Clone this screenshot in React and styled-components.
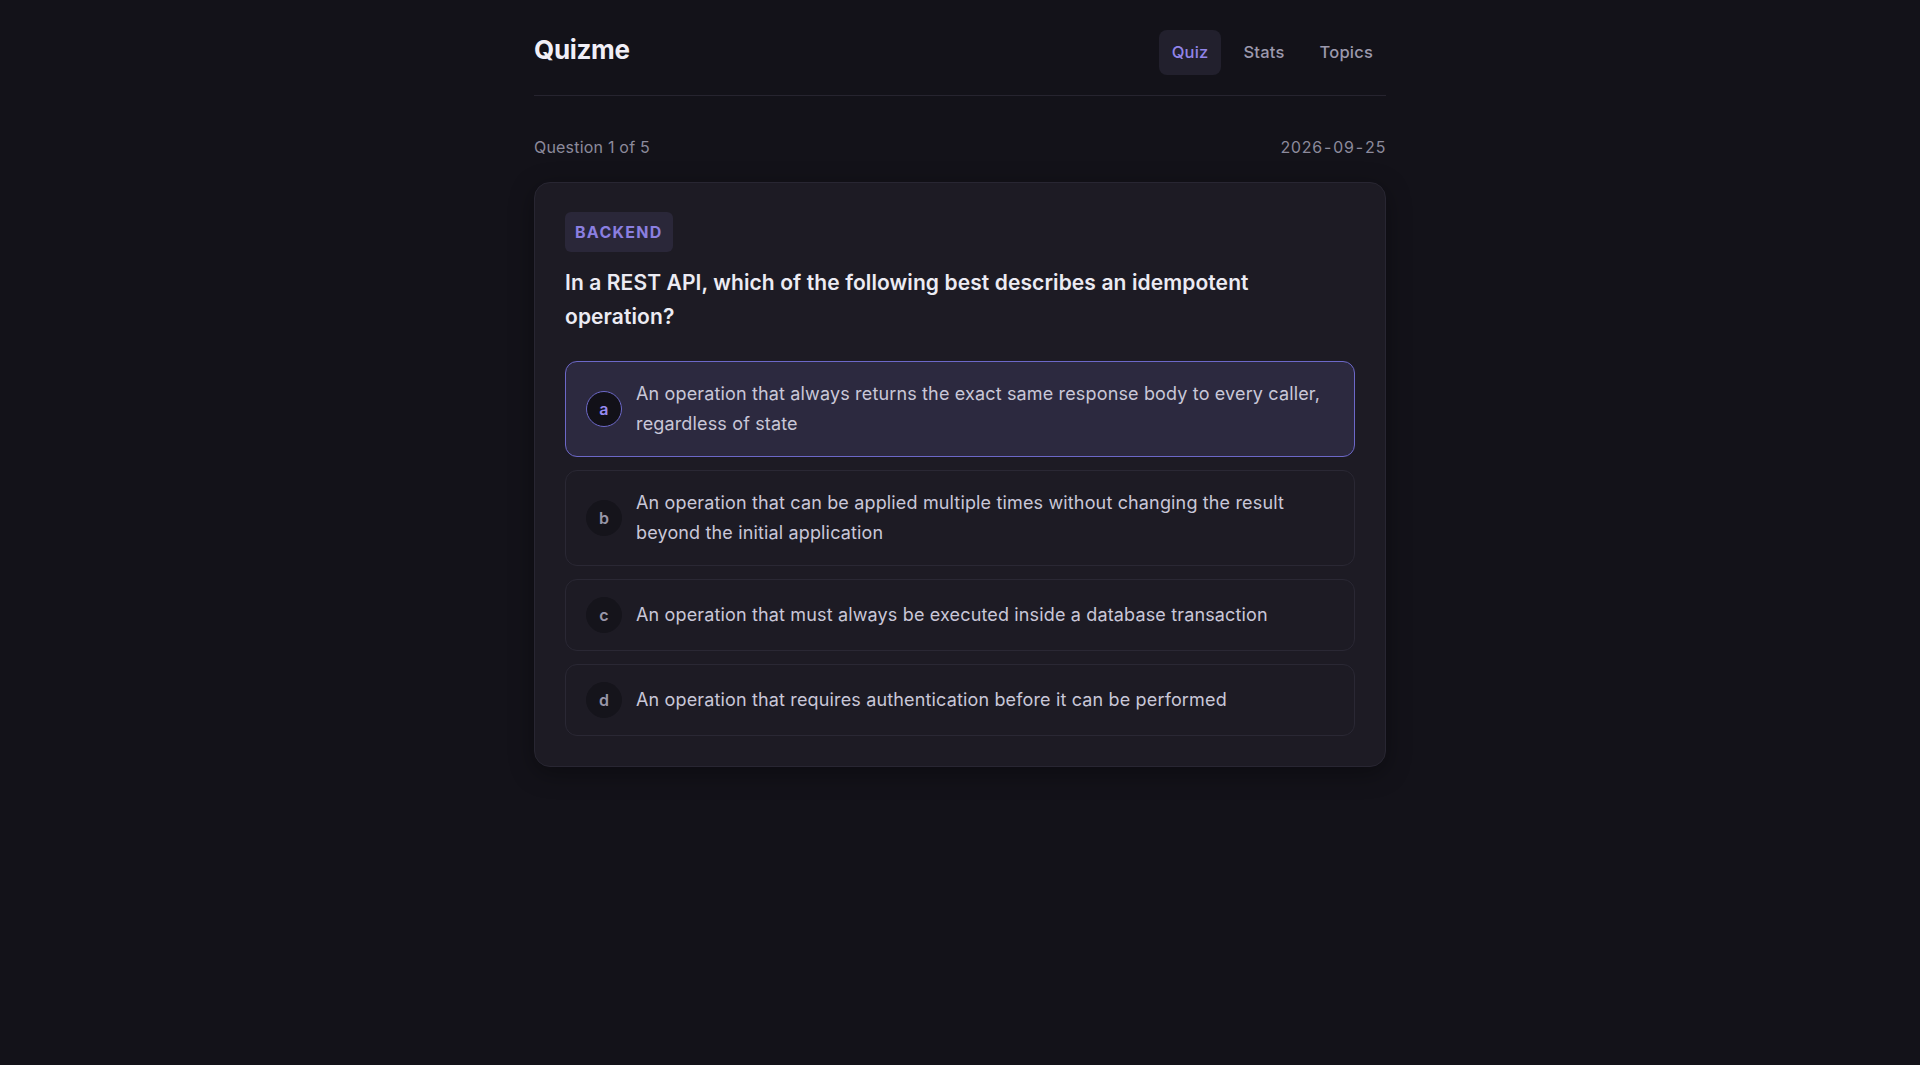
import React, { useState } from "react";
import styled, { createGlobalStyle, css } from "styled-components";

const GlobalStyle = createGlobalStyle`
  html, body {
    margin: 0;
    padding: 0;
    background: #131219;
  }
  body {
    font-family: Inter, "Noto Sans", "Liberation Sans", sans-serif;
    color: #e9e7f0;
    letter-spacing: 0.2px;
    -webkit-font-smoothing: antialiased;
  }
  * {
    box-sizing: border-box;
  }
`;

const Page = styled.div`
  min-height: 1065px;
  background: #131219;
`;

const Container = styled.div`
  max-width: 900px;
  margin: 0 auto;
  padding: 0 24px;
`;

const Header = styled.header`
  display: flex;
  align-items: center;
  justify-content: space-between;
  padding: 30px 0 20px;
  border-bottom: 1px solid #26242f;
`;

const Logo = styled.h1`
  margin: 0 0 6px;
  font-size: 26px;
  font-weight: 700;
  letter-spacing: -0.3px;
  color: #f1eff7;
`;

const Nav = styled.nav`
  display: flex;
  gap: 9px;
`;

const NavLink = styled.a`
  padding: 10px 13px;
  border-radius: 8px;
  font-size: 16.5px;
  line-height: 25px;
  font-weight: 500;
  color: #9c99ad;
  cursor: pointer;
  ${({ $active }) =>
    $active &&
    css`
      background: #22202d;
      color: #9184e8;
    `}
`;

const MetaRow = styled.div`
  display: flex;
  justify-content: space-between;
  margin: 39px 0 23px;
  font-size: 16px;
  line-height: 24px;
  color: #8c8a9c;
`;

const DateText = styled.span`
  font-variant-numeric: tabular-nums;
`;

const Card = styled.section`
  background: #1d1b24;
  border: 1px solid #282632;
  border-radius: 16px;
  padding: 29px 30px 30px;
  box-shadow: 0 6px 24px rgba(0, 0, 0, 0.35);
`;

const Badge = styled.span`
  display: inline-block;
  padding: 8px 10px;
  border-radius: 6px;
  background: #2a2739;
  color: #8b7fe0;
  font-size: 16px;
  line-height: 24px;
  font-weight: 700;
  letter-spacing: 0.08em;
`;

const Question = styled.h2`
  margin: 14px 0 27px;
  font-size: 21px;
  line-height: 34px;
  font-weight: 600;
  letter-spacing: 0.1px;
  color: #ecebf3;
`;

const Options = styled.div`
  display: flex;
  flex-direction: column;
  gap: 13px;
`;

const Option = styled.button`
  display: flex;
  align-items: center;
  gap: 14px;
  width: 100%;
  padding: 17px 20px;
  border-radius: 12px;
  border: 1px solid #2a2834;
  background: #1d1b24;
  text-align: left;
  font-family: inherit;
  letter-spacing: inherit;
  cursor: pointer;
  ${({ $selected }) =>
    $selected &&
    css`
      background: #2c293f;
      border-color: #6c68c8;
    `}
`;

const Letter = styled.span`
  flex: 0 0 36px;
  width: 36px;
  height: 36px;
  border-radius: 50%;
  display: flex;
  align-items: center;
  justify-content: center;
  background: #15141b;
  border: 1.5px solid #15141b;
  color: #9896a8;
  font-size: 16px;
  font-weight: 600;
  ${({ $selected }) =>
    $selected &&
    css`
      background: #121118;
      border-color: #6c68c8;
      color: #978af0;
    `}
`;

const OptionText = styled.span`
  font-size: 18px;
  line-height: 30px;
  letter-spacing: 0.15px;
  color: #c9c7d8;
`;

const options = [
  {
    key: "a",
    text: "An operation that always returns the exact same response body to every caller, regardless of state",
  },
  {
    key: "b",
    text: "An operation that can be applied multiple times without changing the result beyond the initial application",
  },
  {
    key: "c",
    text: "An operation that must always be executed inside a database transaction",
  },
  {
    key: "d",
    text: "An operation that requires authentication before it can be performed",
  },
];

const App = () => {
  const [selected, setSelected] = useState("a");

  return (
    <Page>
      <GlobalStyle />
      <Container>
        <Header>
          <Logo>Quizme</Logo>
          <Nav>
            <NavLink $active>Quiz</NavLink>
            <NavLink>Stats</NavLink>
            <NavLink>Topics</NavLink>
          </Nav>
        </Header>
        <MetaRow>
          <span>Question 1 of 5</span>
          <DateText>2026-09-25</DateText>
        </MetaRow>
        <Card>
          <Badge>BACKEND</Badge>
          <Question>
            In a REST API, which of the following best describes an idempotent
            operation?
          </Question>
          <Options>
            {options.map((opt) => (
              <Option
                key={opt.key}
                $selected={selected === opt.key}
                onClick={() => setSelected(opt.key)}
              >
                <Letter $selected={selected === opt.key}>{opt.key}</Letter>
                <OptionText>{opt.text}</OptionText>
              </Option>
            ))}
          </Options>
        </Card>
      </Container>
    </Page>
  );
};

export default App;
